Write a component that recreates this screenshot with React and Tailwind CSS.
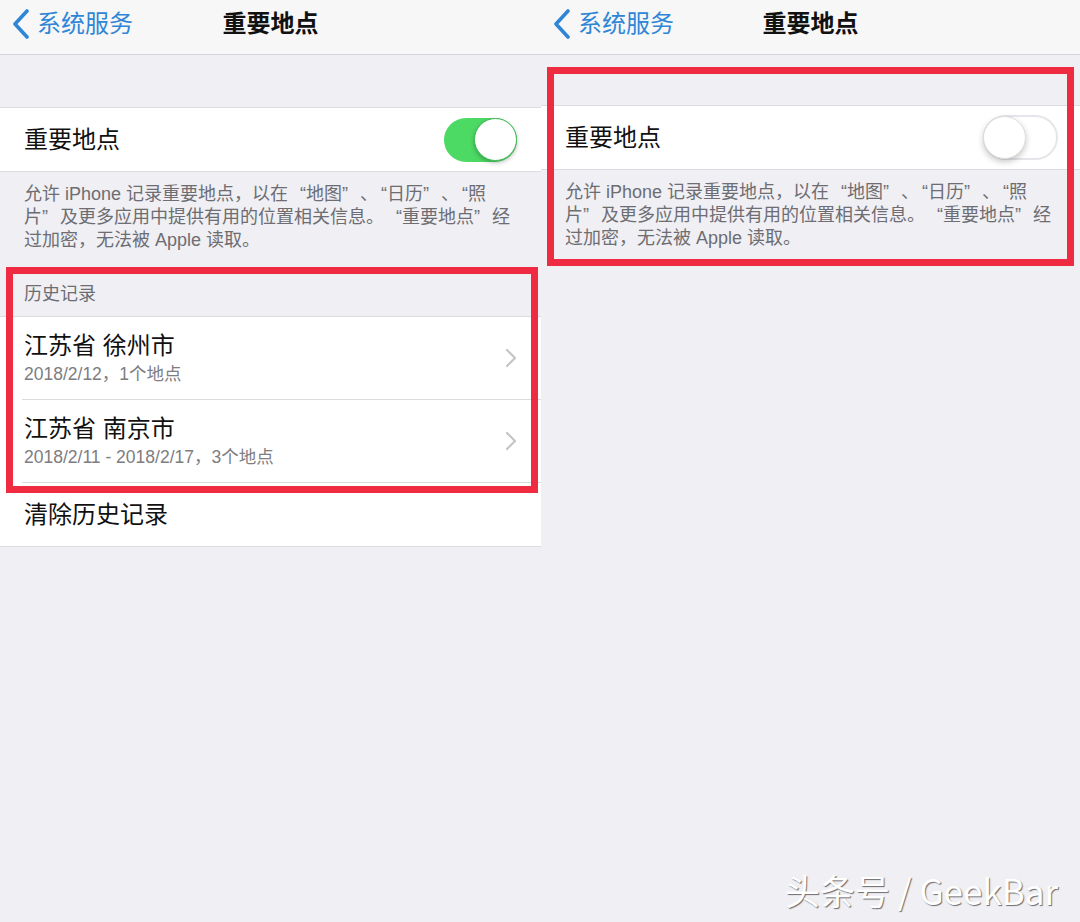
import React from 'react';

const sans = "font-['Liberation_Sans','Noto_Sans_CJK_SC',sans-serif]";

// full-width quotes like iOS, with 、 squeezed before an opening quote
function cjk(text) {
    const chars = Array.from(text);
    return chars.map((c, i) => {
        if (c === '“') return <span key={i} className="inline-block w-[1em] text-right">{c}</span>;
        if (c === '”') return <span key={i} className="inline-block w-[1em] text-left">{c}</span>;
        if (c === '、' && chars[i + 1] === '“') return <span key={i} className="inline-block w-[0.5em]">{c}</span>;
        return c;
    });
}

function BackChevron() {
    return (
        <svg width="20" height="30" viewBox="0 0 20 30" className="shrink-0">
            <path d="M16 2 L4 15 L16 28" fill="none" stroke="#2f86d6" strokeWidth="3.6" strokeLinecap="round" strokeLinejoin="round" />
        </svg>
    );
}

function RowChevron() {
    return (
        <svg width="12" height="20" viewBox="0 0 12 20" className="shrink-0">
            <path d="M2 2 L10 10 L2 18" fill="none" stroke="#c4c4c9" strokeWidth="2.2" strokeLinecap="round" strokeLinejoin="round" />
        </svg>
    );
}

function NavBar() {
    return (
        <div className="h-[55px] bg-[#f7f7f8] border-b border-[#d4d4d8] grid grid-cols-[1fr_auto_1fr] items-center pb-[6px]">
            <div className="flex items-center gap-[6px] pl-[11px] text-[24px] leading-[30px] text-[#2f86d6]">
                <BackChevron />
                <span>系统服务</span>
            </div>
            <div className="text-[24px] leading-[30px] font-bold text-[#111]">重要地点</div>
            <div />
        </div>
    );
}

function Toggle({ on }) {
    if (on) {
        return (
            <div className="w-[73px] h-[44px] rounded-full bg-[#4cd964] flex items-center justify-end">
                <div className="w-[43px] h-[43px] rounded-full bg-white border border-[#3fb854] shadow-[0_2px_4px_rgba(0,0,0,0.25)]" />
            </div>
        );
    }
    return (
        <div className="w-[75px] h-[45px] rounded-full bg-white border-2 border-[#e6e6ea] flex items-center">
            <div className="w-[43px] h-[43px] -ml-[2px] rounded-full bg-white border border-[#dcdcdc] shadow-[0_3px_6px_rgba(0,0,0,0.22)]" />
        </div>
    );
}

function Footer() {
    return (
        <div className="pt-[11px] px-6 text-[18px] leading-[23px] text-[#6d6d72] whitespace-nowrap">
            <div>{cjk('允许 iPhone 记录重要地点，以在“地图”、“日历”、“照')}</div>
            <div>{cjk('片”及更多应用中提供有用的位置相关信息。“重要地点”经')}</div>
            <div>{cjk('过加密，无法被 Apple 读取。')}</div>
        </div>
    );
}

const history = [
    { city: '江苏省 徐州市', info: '2018/2/12，1个地点' },
    { city: '江苏省 南京市', info: '2018/2/11 - 2018/2/17，3个地点' },
];

function LeftPanel() {
    return (
        <div className="w-[541px] relative">
            <NavBar />
            <div className="mt-[52px] h-[65px] bg-white border-y border-[#dcdce0] flex items-center justify-between pl-6 pr-6">
                <span className="text-[24px] text-[#111]">重要地点</span>
                <Toggle on />
            </div>
            <Footer />
            <div className="pt-[31px] pb-[10px] px-6 text-[18px] leading-[23px] text-[#6d6d72]">历史记录</div>
            <div className="bg-white border-y border-[#dcdce0]">
                {history.map((item) => (
                    <div key={item.city} className="pl-[22px]">
                        <div className="h-[83px] border-b border-[#dcdce0] flex items-center justify-between pl-[2px] pr-6">
                            <div className="flex flex-col">
                                <span className="text-[24px] leading-[30px] text-[#111]">{item.city}</span>
                                <span className="mt-[1px] text-[17.5px] leading-[24px] text-[#7d7d82]">{item.info}</span>
                            </div>
                            <RowChevron />
                        </div>
                    </div>
                ))}
                <div className="h-[63px] flex items-center pl-6 text-[24px] text-[#111]">清除历史记录</div>
            </div>

            {/* highlight */}
            <div className="absolute left-[6px] top-[267px] w-[532px] h-[226px] border-[7px] border-[#ee2b40]" />
        </div>
    );
}

function RightPanel() {
    return (
        <div className="flex-1 relative">
            <NavBar />
            <div className="mt-[50px] h-[65px] bg-white border-y border-[#dcdce0] flex items-center justify-between pl-6 pr-[22px]">
                <span className="text-[24px] text-[#111]">重要地点</span>
                <Toggle on={false} />
            </div>
            <Footer />

            {/* highlight */}
            <div className="absolute left-[6px] top-[67px] w-[527px] h-[199px] border-[7px] border-[#ee2b40]" />
        </div>
    );
}

export default function App() {
    return (
        <div lang="zh-CN" className={`h-[922px] bg-[#efeff4] flex relative overflow-hidden ${sans}`}>
            <LeftPanel />
            <RightPanel />
            <div className="absolute right-[22px] bottom-[12px] text-[35px] leading-[40px] text-white [text-shadow:1px_1px_1px_rgba(0,0,0,0.55)] font-['Noto_Sans_CJK_SC',sans-serif]">
                头条号 / GeekBar
            </div>
        </div>
    );
}
